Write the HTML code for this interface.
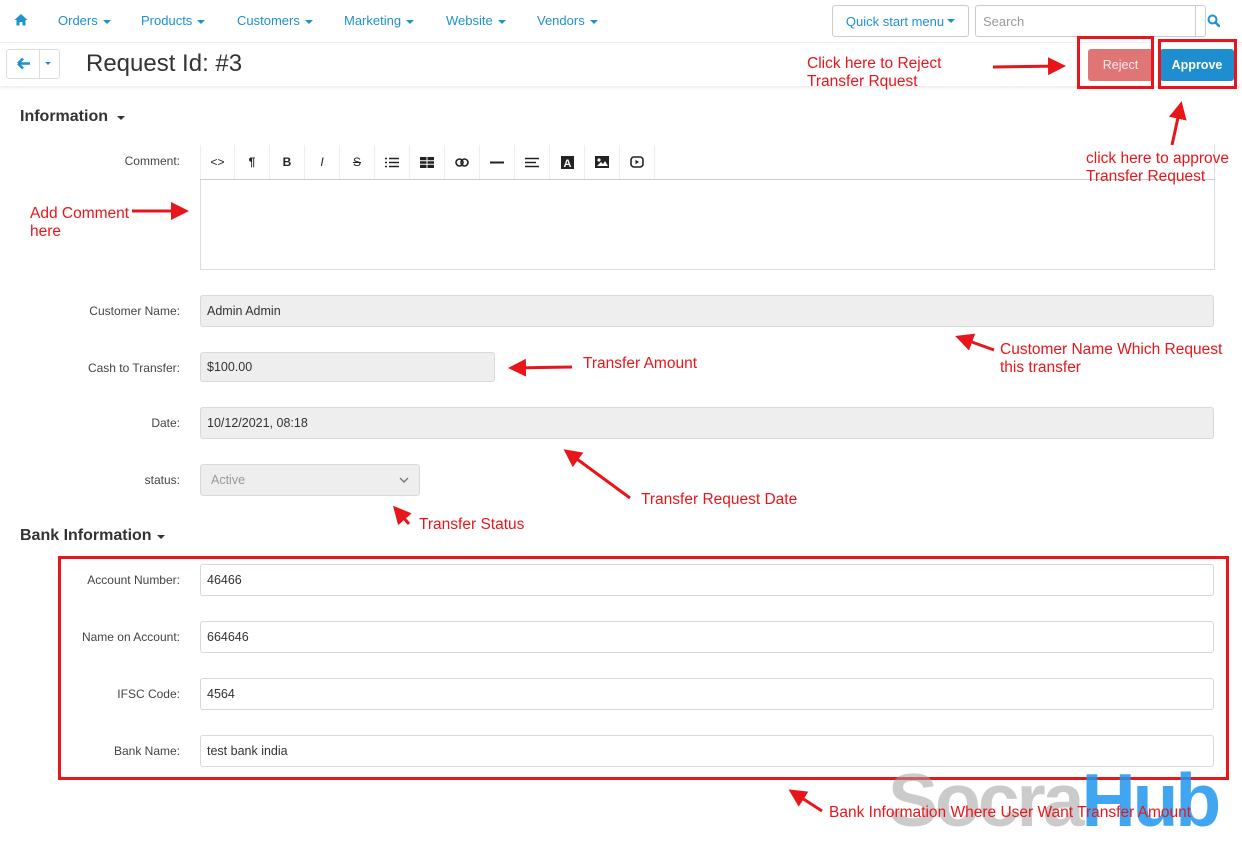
<!DOCTYPE html>
<html><head><meta charset="utf-8">
<style>
*{box-sizing:border-box;margin:0;padding:0}
body{width:1242px;height:841px;background:#fff;font-family:"Liberation Sans",sans-serif;position:relative;overflow:hidden;color:#333}
.a{position:absolute}
.nav{font-size:13px;color:#1e91cf;top:13px}
.car{display:inline-block;width:0;height:0;border-left:4px solid transparent;border-right:4px solid transparent;border-top:4px solid currentColor;vertical-align:middle;margin-left:5px}
.lbl{font-size:12px;color:#444;text-align:right;width:180px;left:0}
.inp{border:1px solid #d9d9d9;border-radius:3px;font-size:12.5px;padding:0 6px;display:flex;align-items:center;height:32px;color:#333}
.ro{background:#eee}
.red{color:#e8161b;font-size:15.5px;line-height:18px}
.rb{border:3px solid #e8161b}
.tb{position:absolute;top:145px;width:35px;height:34px;border-right:1px solid #eee;display:flex;align-items:center;justify-content:center;font-size:12px;color:#222}
</style></head><body>
<div class="a" style="left:0;top:0;width:1242px;height:43px;border-bottom:1px solid #eee"></div>
<svg class="a" style="left:14px;top:13px" width="14" height="13" viewBox="0 0 14 13"><path d="M7 1L0.5 7H2.5V12.5H5.5V9H8.5V12.5H11.5V7H13.5Z" fill="#1e91cf"/></svg>
<div class="a nav" style="left:58px">Orders<span class="car"></span></div>
<div class="a nav" style="left:141px">Products<span class="car"></span></div>
<div class="a nav" style="left:237px">Customers<span class="car"></span></div>
<div class="a nav" style="left:344px">Marketing<span class="car"></span></div>
<div class="a nav" style="left:446px">Website<span class="car"></span></div>
<div class="a nav" style="left:537px">Vendors<span class="car"></span></div>
<div class="a" style="left:832px;top:5px;width:137px;height:32px;border:1px solid #ccc;border-radius:3px;font-size:13px;color:#1e91cf;display:flex;align-items:center;justify-content:center">Quick start menu<span class="car" style="margin-left:3px"></span></div>
<div class="a" style="left:975px;top:5px;width:231px;height:32px;border:1px solid #ccc;border-radius:3px"></div>
<div class="a" style="left:983px;top:14px;font-size:13px;color:#999">Search</div>
<div class="a" style="left:1195px;top:5px;width:1px;height:32px;background:#ccc"></div>
<svg class="a" style="left:1207px;top:14px" width="13" height="13" viewBox="0 0 13 13"><circle cx="5.5" cy="5.5" r="4" stroke="#1e91cf" stroke-width="2" fill="none"/><path d="M8.5 8.5L12 12" stroke="#1e91cf" stroke-width="2.4" stroke-linecap="round"/></svg>
<div class="a" style="left:0;top:44px;width:1242px;height:42px;box-shadow:0 2px 3px rgba(0,0,0,.08)"></div>
<div class="a" style="left:6px;top:49px;width:54px;height:30px;border:1px solid #ddd;border-radius:3px"></div>
<div class="a" style="left:39px;top:49px;width:1px;height:30px;background:#ddd"></div>
<svg class="a" style="left:17px;top:57px" width="14" height="13" viewBox="0 0 14 13"><path d="M1 6.5H13M1 6.5L6 1.5M1 6.5L6 11.5" stroke="#1e91cf" stroke-width="2.6" fill="none"/></svg>
<div class="a" style="left:45px;top:62px;border-left:3.5px solid transparent;border-right:3.5px solid transparent;border-top:3.5px solid #1e91cf"></div>
<div class="a" style="left:86px;top:50px;font-size:24px;color:#333">Request Id: #3</div>
<div class="a" style="left:1088px;top:49px;width:65px;height:32px;background:#e07575;border-radius:3px;font-size:12.5px;display:flex;align-items:center;justify-content:center;color:#fde9e9">Reject</div>
<div class="a" style="left:1160px;top:49px;width:74px;height:32px;background:#1e8ed1;border-radius:3px;color:#fff;font-size:12.5px;font-weight:bold;display:flex;align-items:center;justify-content:center">Approve</div>
<div class="a rb" style="left:1077px;top:36px;width:77px;height:53px"></div>
<div class="a rb" style="left:1158px;top:39px;width:79px;height:50px"></div>
<div class="a" style="left:20px;top:108px;font-size:16px;font-weight:bold;color:#333">Information</div>
<div class="a" style="left:117px;top:116px;border-left:4.5px solid transparent;border-right:4.5px solid transparent;border-top:4.5px solid #333"></div>
<div class="a lbl" style="top:154px">Comment:</div>
<div class="a" style="left:200px;top:145px;width:1015px;height:125px;border:1px solid #ddd;border-top:none"></div>
<div class="a" style="left:200px;top:179px;width:1015px;height:1px;background:#ccc"></div>
<div class="tb" style="left:200px;border-left:1px solid #eee">&lt;&gt;</div>
<div class="tb" style="left:235px;font-weight:bold">¶</div>
<div class="tb" style="left:270px;font-weight:bold">B</div>
<div class="tb" style="left:305px;font-style:italic">I</div>
<div class="tb" style="left:340px"><s>S</s></div>
<div class="tb" style="left:375px"><svg width="14" height="11"><path d="M0 1.5H2M4 1.5H14M0 5.5H2M4 5.5H14M0 9.5H2M4 9.5H14" stroke="#222" stroke-width="1.6"/></svg></div>
<div class="tb" style="left:410px"><svg width="14" height="11"><rect x="0" y="0" width="14" height="11" fill="#222"/><path d="M0 3.7H14M0 7.3H14M7 0V11" stroke="#fff" stroke-width="1"/></svg></div>
<div class="tb" style="left:445px"><svg width="14" height="9"><rect x="1" y="1" width="7" height="7" rx="3.5" stroke="#222" stroke-width="1.6" fill="none"/><rect x="6" y="1" width="7" height="7" rx="3.5" stroke="#222" stroke-width="1.6" fill="none"/></svg></div>
<div class="tb" style="left:480px"><svg width="14" height="3"><path d="M0 1.5H14" stroke="#222" stroke-width="2"/></svg></div>
<div class="tb" style="left:515px"><svg width="14" height="11"><path d="M0 1.5H14M0 5.5H11M0 9.5H14" stroke="#222" stroke-width="1.6"/></svg></div>
<div class="tb" style="left:550px"><svg width="13" height="13"><rect width="13" height="13" fill="#222"/><text x="6.5" y="11" font-size="11" font-weight="bold" fill="#fff" text-anchor="middle" font-family="Liberation Sans">A</text></svg></div>
<div class="tb" style="left:585px"><svg width="14" height="12"><rect width="14" height="12" fill="#222"/><circle cx="4" cy="4" r="1.6" fill="#fff"/><path d="M2 10L6 6L8 8L10 5L13 10Z" fill="#fff"/></svg></div>
<div class="tb" style="left:620px"><svg width="14" height="12"><rect x="1" y="1" width="12" height="10" rx="3" stroke="#222" stroke-width="1.6" fill="none"/><path d="M5.5 3.8L9 6L5.5 8.2Z" fill="#222"/></svg></div>
<div class="a lbl" style="top:304px">Customer Name:</div>
<div class="a inp ro" style="left:200px;top:295px;width:1014px">Admin Admin</div>
<div class="a lbl" style="top:361px">Cash to Transfer:</div>
<div class="a inp ro" style="left:200px;top:352px;width:295px;height:30px">$100.00</div>
<div class="a lbl" style="top:416px">Date:</div>
<div class="a inp ro" style="left:200px;top:407px;width:1014px">10/12/2021, 08:18</div>
<div class="a lbl" style="top:473px">status:</div>
<div class="a inp ro" style="left:200px;top:464px;width:220px;color:#999;justify-content:space-between;padding:0 10px">Active<svg width="10" height="6"><path d="M1 1L5 5L9 1" stroke="#777" stroke-width="1.4" fill="none"/></svg></div>
<div class="a" style="left:20px;top:527px;font-size:16px;font-weight:bold;color:#333">Bank Information</div>
<div class="a" style="left:157px;top:535px;border-left:4.5px solid transparent;border-right:4.5px solid transparent;border-top:4.5px solid #333"></div>
<div class="a lbl" style="top:573px">Account Number:</div>
<div class="a inp" style="left:200px;top:564px;width:1014px">46466</div>
<div class="a lbl" style="top:630px">Name on Account:</div>
<div class="a inp" style="left:200px;top:621px;width:1014px">664646</div>
<div class="a lbl" style="top:687px">IFSC Code:</div>
<div class="a inp" style="left:200px;top:678px;width:1014px">4564</div>
<div class="a lbl" style="top:744px">Bank Name:</div>
<div class="a inp" style="left:200px;top:735px;width:1014px">test bank india</div>
<div class="a rb" style="left:58px;top:556px;width:1171px;height:224px"></div>
<div class="a" style="left:888px;top:763px;font-size:75px;line-height:75px;font-weight:bold;letter-spacing:-3px;white-space:nowrap"><span style="color:rgba(160,160,160,.55)">Socra</span><span style="color:rgba(30,150,240,.85)">Hub</span></div>
<div class="a red" style="left:807px;top:55px">Click here to Reject<br>Transfer Rquest</div>
<div class="a red" style="left:1086px;top:150px">click here to approve<br>Transfer Request</div>
<div class="a red" style="left:30px;top:205px">Add Comment<br>here</div>
<div class="a red" style="left:1000px;top:341px">Customer Name Which Request<br>this transfer</div>
<div class="a red" style="left:583px;top:355px">Transfer Amount</div>
<div class="a red" style="left:641px;top:491px">Transfer Request Date</div>
<div class="a red" style="left:419px;top:516px">Transfer Status</div>
<div class="a red" style="left:829px;top:804px">Bank Information Where User Want Transfer Amount</div>
<svg class="a" style="left:0;top:0" width="1242" height="841">
<defs><marker id="m" markerWidth="6" markerHeight="6" refX="5" refY="3" orient="auto" markerUnits="strokeWidth"><path d="M0 0L6 3L0 6Z" fill="#e8161b"/></marker></defs>
<g stroke="#e8161b" stroke-width="3" fill="none" marker-end="url(#m)">
<line x1="993" y1="67" x2="1063" y2="66"/>
<line x1="1172" y1="145" x2="1181" y2="104"/>
<line x1="132" y1="211" x2="186" y2="211"/>
<line x1="994" y1="350" x2="958" y2="337"/>
<line x1="572" y1="367" x2="511" y2="368"/>
<line x1="630" y1="498" x2="566" y2="451"/>
<line x1="409" y1="524" x2="395" y2="508"/>
<line x1="822" y1="811" x2="791" y2="791"/>
</g></svg>
</body></html>
